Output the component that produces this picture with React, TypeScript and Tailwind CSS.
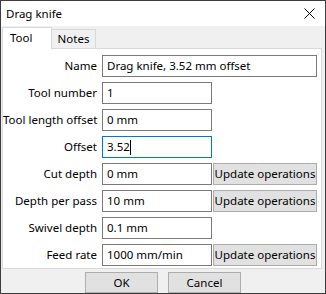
import React from 'react'

const font = { fontFamily: '"Segoe UI", "Noto Sans", sans-serif' }

function Field({ value, focused }: { value: string; focused?: boolean }) {
  return (
    <div
      className={`w-[110px] h-[22px] bg-white border flex items-center pl-[4px] ${
        focused ? 'border-[#0078d7]' : 'border-[#7a7a7a]'
      }`}
    >
      <span>{value}</span>
      {focused && <span className="inline-block w-px h-[15px] bg-black" />}
    </div>
  )
}

function UpdateButton() {
  return (
    <div className="ml-[1px] w-[104px] h-[22px] bg-[#e1e1e1] border border-[#adadad] flex items-center justify-center">
      Update operations
    </div>
  )
}

function Row({ label, children }: { label: string; children: React.ReactNode }) {
  return (
    <div className="flex items-center h-[22px]">
      <div className="w-[94px] text-right">{label}</div>
      <div className="ml-[5px] flex items-center">{children}</div>
    </div>
  )
}

export default function App() {
  return (
    <div
      className="w-[326px] h-[294px] bg-[#f0f0f0] border border-[#3c3c3c] flex flex-col text-[11.5px] text-black leading-none whitespace-nowrap"
      style={font}
    >
      {/* title bar */}
      <div className="h-[25px] bg-white flex items-center justify-between pl-[5px] pr-[10px]">
        <span>Drag knife</span>
        <svg width="11" height="11" viewBox="0 0 11 11">
          <path d="M0.5 0.5 L10.5 10.5 M10.5 0.5 L0.5 10.5" stroke="#000" strokeWidth="1" />
        </svg>
      </div>

      {/* tabs */}
      <div className="flex items-end pl-[1px] h-[22px]">
        <div className="w-[50px] h-[22px] bg-white border border-b-0 border-[#d9d9d9] flex items-center pl-[7px] relative z-10 -mb-px pb-[2px]">
          Tool
        </div>
        <div className="w-[44px] h-[19px] bg-[#f0f0f0] border border-l-0 border-b-0 border-[#d9d9d9] flex items-center justify-center">
          Notes
        </div>
      </div>

      {/* panel */}
      <div className="ml-[1px] w-[320px] h-[221px] bg-white border border-[#d9d9d9] pt-[6px] flex flex-col gap-[5px]">
        <Row label="Name">
          <div className="w-[215px] h-[22px] bg-white border border-[#7a7a7a] flex items-center pl-[4px]">
            Drag knife, 3.52 mm offset
          </div>
        </Row>
        <Row label="Tool number">
          <Field value="1" />
        </Row>
        <Row label="Tool length offset">
          <Field value="0 mm" />
        </Row>
        <Row label="Offset">
          <Field value="3.52" focused />
        </Row>
        <Row label="Cut depth">
          <Field value="0 mm" />
          <UpdateButton />
        </Row>
        <Row label="Depth per pass">
          <Field value="10 mm" />
          <UpdateButton />
        </Row>
        <Row label="Swivel depth">
          <Field value="0.1 mm" />
        </Row>
        <Row label="Feed rate">
          <Field value="1000 mm/min" />
          <UpdateButton />
        </Row>
      </div>

      {/* buttons */}
      <div className="flex pl-[84px] gap-[10px] mt-[3px]">
        <div className="w-[73px] h-[21px] bg-[#e1e1e1] border border-[#adadad] flex items-center justify-center">
          OK
        </div>
        <div className="w-[73px] h-[21px] bg-[#e1e1e1] border border-[#adadad] flex items-center justify-center">
          Cancel
        </div>
      </div>
    </div>
  )
}
